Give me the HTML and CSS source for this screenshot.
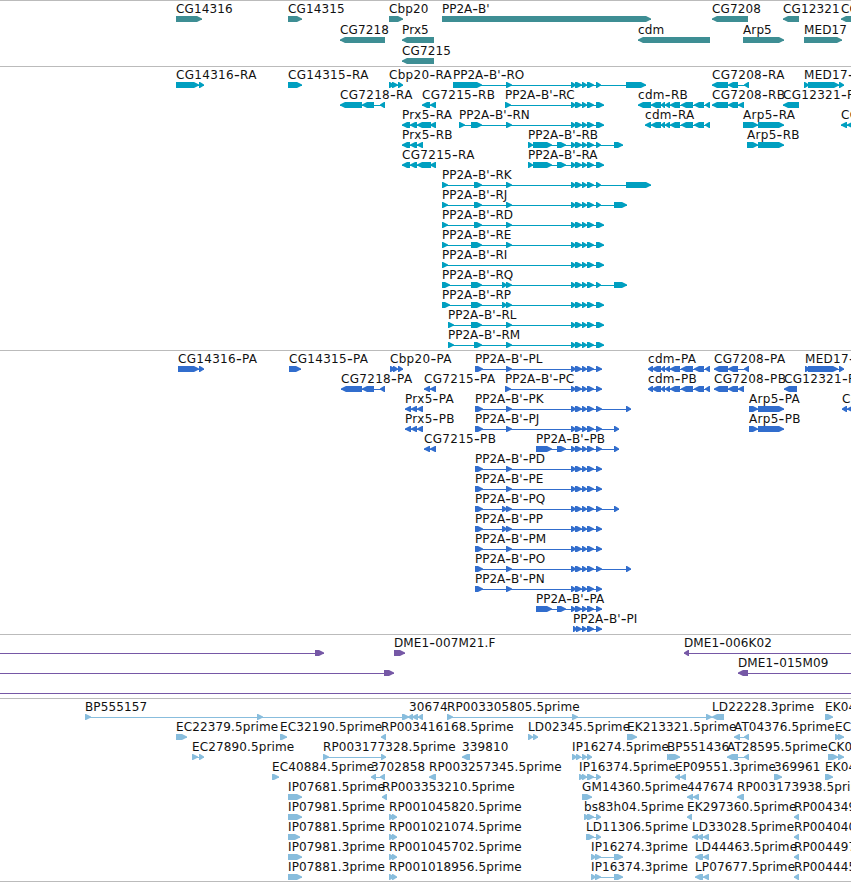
FILE: index.html
```html
<!DOCTYPE html>
<html lang="en">
<head>
    <meta charset="UTF-8">
    <meta name="viewport" content="width=device-width, initial-scale=1.0">
    <title>Genome Browser</title>
    <link rel="stylesheet" href="styles.css">
</head>
<body>
    <main class="browser">
        <section class="track track-gene" id="gene"></section>
        <section class="track track-mrna" id="mrna"></section>
        <section class="track track-cds" id="cds"></section>
        <section class="track track-bac" id="bac"></section>
        <section class="track track-est" id="est"></section>
    </main>
    <script src="tracks.js"></script>
</body>
</html>
```

FILE: styles.css
```css
body {
    margin: 0;
    background-color: #fff;
    overflow: hidden;
}
.browser {
    display: flex;
    flex-direction: column;
    border-bottom: 1px solid #bbb;
}
.track {
    border-top: 1px solid #bbb;
    padding-bottom: 3px;
}
.row {
    display: block;
    width: 100%;
    height: 20px;
    overflow: visible;
}
.track-gene .row {
    height: 21px;
}
.track-gene, .track-est {
    padding-bottom: 2px;
}
.track-gene { color: #3e8e94; }
.track-mrna { color: #009fc0; }
.track-cds { color: #316dcd; }
.track-bac { color: #7658a6; }
.track-est { color: #88bddd; }
.exon, .intron {
    fill: currentColor;
}
.intron {
    shape-rendering: crispEdges;
}
.label {
    font-family: "DejaVu Sans", sans-serif;
    font-size: 12px;
    letter-spacing: 0.12px;
    fill: #111;
    white-space: pre;
}
.track-mrna .label, .track-cds .label {
    letter-spacing: 0.3px;
}
.track .label-tight {
    letter-spacing: 0;
}
.dash {
    font-size: 16px;
}
```

FILE: tracks.js
```js
// feature: [label, strand, "start-end start-end ..."], the label sits at the first block
// an optional 4th value moves the label
const TAIL = '571-576 575-582 582-587 587-594 ';
const A = TAIL + '596-604';
const B = TAIL + '596-601';
const P = TAIL + '596-602';
const CDM = '661-665 665-670 670-680 681-693 694-704 705-710';

const tracks = {
    gene: [
        [['CG14316', '+', '176-202'], ['CG14315', '+', '288-302'], ['Cbp20', '+', '389-403'],
         ["PP2A-B'", '+', '442-651'], ['CG7208', '-', '712-748'], ['CG12321', '-', '783-799'], ['CG', '-', '841-870']],
        [['CG7218', '-', '340-385'], ['Prx5', '-', '402-434'], ['cdm', '-', '638-710'],
         ['Arp5', '+', '743-784'], ['MED17', '+', '804-842']],
        [['CG7215', '-', '402-434']]
    ],
    mrna: [
        [['CG14316-RA', '+', '176-199 199-204'], ['CG14315-RA', '+', '288-302'], ['Cbp20-RA', '+', '389-394 392-398 398-403'],
         ["PP2A-B'-RO", '+', '453-482 506-512 ' + B + ' 626-646'], ['CG7208-RA', '-', '712-728 728-738 744-749'],
         ['MED17-RA', '+', '804-809 808-839 839-844']],
        [['CG7218-RA', '-', '340-362 362-374 380-385'], ['CG7215-RB', '-', '422-430 430-436'],
         ["PP2A-B'-RC", '+', '505-511 ' + A], ['cdm-RB', '-', '638-651 651-661 ' + CDM],
         ['CG7208-RB', '-', '712-728 728-738 738-744'], ['CG12321-RA', '-', '783-799']],
        [['Prx5-RA', '-', '402-410 410-417 417-431 430-436'], ["PP2A-B'-RN", '+', '459-465 471-482 506-512 ' + A],
         ['cdm-RA', '-', '645-651 651-661 ' + CDM], ['Arp5-RA', '+', '743-758 758-784'], ['CG', '-', '841-847 847-860']],
        [['Prx5-RB', '-', '402-410 410-417 417-423'], ["PP2A-B'-RB", '+', '528-533 533-552 557-566 ' + B + ' 614-623'],
         ['Arp5-RB', '+', '747-758 758-784']],
        [['CG7215-RA', '-', '402-410 410-417 417-431 430-436'], ["PP2A-B'-RA", '+', '528-533 533-552 557-566 ' + A]],
        [["PP2A-B'-RK", '+', '442-448 474-482 506-512 ' + B + ' 626-651']],
        [["PP2A-B'-RJ", '+', '442-448 474-482 506-512 ' + B + ' 614-627']],
        [["PP2A-B'-RD", '+', '442-448 474-482 506-512 ' + A]],
        [["PP2A-B'-RE", '+', '442-448 471-482 506-512 ' + A]],
        [["PP2A-B'-RI", '+', '442-448 ' + A]],
        [["PP2A-B'-RQ", '+', '442-450 471-482 502-507 506-512 ' + B + ' 614-627']],
        [["PP2A-B'-RP", '+', '442-450 471-482 502-507 506-512 ' + A]],
        [["PP2A-B'-RL", '+', '448-454 471-482 506-512 ' + A]],
        [["PP2A-B'-RM", '+', '448-454 474-482 506-512 ' + A]]
    ],
    cds: [
        [['CG14316-PA', '+', '178-199 199-204'], ['CG14315-PA', '+', '289-301'], ['Cbp20-PA', '+', '390-395 393-398 398-403'],
         ["PP2A-B'-PL", '+', '475-483 506-512 ' + P], ['cdm-PA', '-', '648-653 652-661 ' + CDM],
         ['CG7208-PA', '-', '714-728 728-738 744-749'], ['MED17-PA', '+', '805-810 808-838 839-844']],
        [['CG7218-PA', '-', '341-362 362-374 380-385'], ['CG7215-PA', '-', '424-430 430-436'],
         ["PP2A-B'-PC", '+', '505-511 ' + P], ['cdm-PB', '-', '648-653 652-661 ' + CDM],
         ['CG7208-PB', '-', '714-728 728-738 738-744'], ['CG12321-PA', '-', '784-797']],
        [['Prx5-PA', '-', '405-411 411-417 417-423'], ["PP2A-B'-PK", '+', '475-483 506-512 ' + P + ' 626-631'],
         ['Arp5-PA', '+', '749-758 758-784'], ['CG', '-', '842-847 847-860']],
        [['Prx5-PB', '-', '405-411 411-417 417-423'], ["PP2A-B'-PJ", '+', '475-483 506-512 ' + P + ' 614-619'],
         ['Arp5-PB', '+', '749-758 758-784']],
        [['CG7215-PB', '-', '424-430 430-436'], ["PP2A-B'-PB", '+', '536-552 557-566 ' + P + ' 614-619']],
        [["PP2A-B'-PD", '+', '475-483 506-512 ' + P]],
        [["PP2A-B'-PE", '+', '475-483 506-512 ' + P]],
        [["PP2A-B'-PQ", '+', '475-483 502-507 506-512 ' + P + ' 614-619']],
        [["PP2A-B'-PP", '+', '475-483 502-507 506-512 ' + P]],
        [["PP2A-B'-PM", '+', '475-483 506-512 ' + P]],
        [["PP2A-B'-PO", '+', '475-483 506-512 ' + P + ' 626-631']],
        [["PP2A-B'-PN", '+', '475-483 506-512 ' + P]],
        [["PP2A-B'-PA", '+', '536-552 557-566 ' + P]],
        [["PP2A-B'-PI", '+', '573-577 576-582 582-587 587-594 596-602']]
    ],
    bac: [
        [['', '+', '-20--10 315-324'], ['DME1-007M21.F', '+', '394-405'], ['DME1-006K02', '-', '684-689 870-880']],
        [['', '+', '-20--10 384-394'], ['DME1-015M09', '-', '738-748 870-880']],
        [['', '+', '-20--10 870-880']]
    ],
    est: [
        [['BP555157', '+', '85-91 257-263 402-409'], ['30674', '-', '408-413 412-418 418-423', 409],
         ['RP003305805.5prime', '+', '447-453 572-578 706-712'], ['LD22228.3prime', '-', '712-724'], ['EK04', '+', '825-833']],
        [['EC22379.5prime', '+', '176-187'], ['EC32190.5prime', '+', '280-287'], ['RP003416168.5prime', '-', '381-386'],
         ['LD02345.5prime', '+', '528-533 533-538'], ['EK213321.5prime', '+', '627-637'],
         ['AT04376.5prime', '-', '734-740 744-749'], ['EC', '+', '835-840 838-844']],
        [['EC27890.5prime', '+', '192-198 199-204'], ['RP003177328.5prime', '+', '323-329 381-386'], ['339810', '-', '462-470'],
         ['IP16274.5prime', '+', '572-577 576-581 582-587 587-592'], ['BP551436', '+', '667-672 669-680'],
         ['AT28595.5prime', '-', '727-738 744-749'], ['CK0', '+', '828-838 838-844']],
        [['EC40884.5prime', '+', '272-279'], ['3702858', '-', '371-376 380-385'], ['RP003257345.5prime', '-', '429-436'],
         ['IP16374.5prime', '+', '579-584 582-587 587-594 596-601'], ['EP09551.3prime', '-', '675-680 680-686'],
         ['369961', '+', '774-782'], ['EK04', '+', '825-833']],
        [['IP07681.5prime', '+', '288-302'], ['RP003353210.5prime', '-', '382-387'], ['GM14360.5prime', '+', '582-592'],
         ['447674', '-', '687-693 693-699'], ['RP003173938.5prime', '-', '737-744']],
        [['IP07981.5prime', '+', '288-302'], ['RP001045820.5prime', '+', '389-394 392-397'],
         ['bs83h04.5prime', '+', '584-589 587-594 596-601'], ['EK297360.5prime', '-', '687-692'], ['RP004349', '-', '794-799']],
        [['IP07881.5prime', '+', '288-300'], ['RP001021074.5prime', '+', '389-394 392-397'],
         ['LD11306.5prime', '+', '586-594 596-601'], ['LD33028.5prime', '-', '692-698 697-703 703-709'], ['RP004040', '-', '794-799']],
        [['IP07981.3prime', '+', '288-302'], ['RP001045702.5prime', '+', '389-394 392-397'],
         ['IP16274.3prime', '+', '591-596 595-601 614-623'], ['LD44463.5prime', '-', '695-703 703-709'], ['RP004497', '-', '794-799']],
        [['IP07881.3prime', '+', '288-302'], ['RP001018956.5prime', '+', '389-394 392-397'],
         ['IP16374.3prime', '+', '591-596 595-601 614-623'], ['LP07677.5prime', '-', '695-703 703-709'], ['RP004445', '-', '794-799']]
    ]
};

function exon(start, end, strand) {
    const head = Math.min(6, end - start);
    const points = strand === '+'
        ? `${start},15 ${end - head + 1},15 ${end},17.5 ${end},18.5 ${end - head + 1},21 ${start},21`
        : `${end},15 ${start + head - 1},15 ${start},17.5 ${start},18.5 ${start + head - 1},21 ${end},21`;
    return `<polygon class="exon" points="${points}"/>`;
}

function feature([label, strand, spans, labelX]) {
    const blocks = spans.split(' ').map(s => s.match(/^(-?\d+)-(-?\d+)$/).slice(1).map(Number));
    const start = blocks[0][0];
    const end = blocks[blocks.length - 1][1];
    const labelClass = label.startsWith('PP2A') ? 'label label-tight' : 'label';
    // the wider dash is dropped a pixel, the glyph after it goes back up
    let drop = false;
    const text = label.split(/(-)/).map(part => {
        if (part === '-') {
            drop = true;
            return '<tspan class="dash" dy="1">-</tspan>';
        }
        const out = drop ? `<tspan dy="-1">${part}</tspan>` : part;
        drop = false;
        return out;
    }).join('');
    return `<rect class="intron" x="${start}" y="18" width="${end - start}" height="1"/>`
        + blocks.map(b => exon(b[0], b[1], strand)).join('')
        + (label ? `<text class="${labelClass}" x="${labelX || start}" y="12">${text}</text>` : '');
}

for (const id in tracks) {
    document.getElementById(id).innerHTML = tracks[id]
        .map(row => `<svg class="row">${row.map(feature).join('')}</svg>`)
        .join('');
}
```
